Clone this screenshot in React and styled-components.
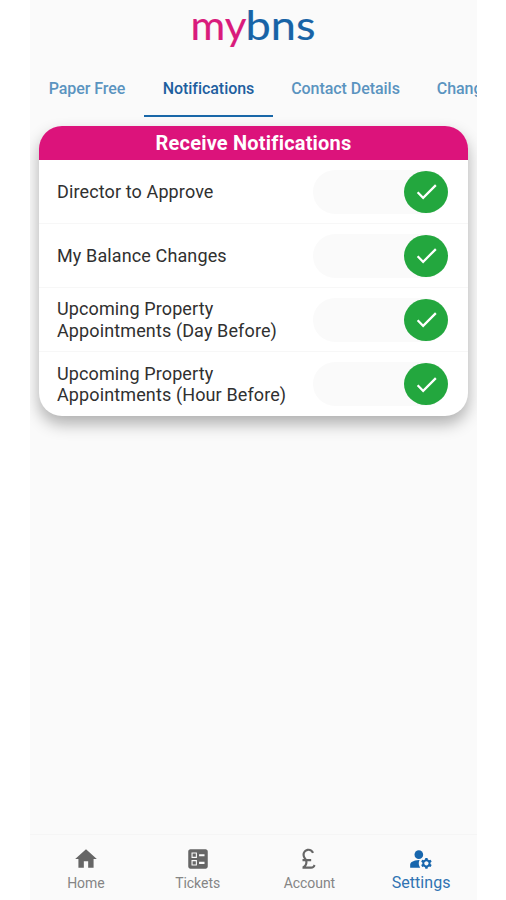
import React, { useState } from 'react';
import styled, { createGlobalStyle } from 'styled-components';
import {
  MdHome,
  MdBallot,
  MdCurrencyPound,
  MdManageAccounts,
  MdCheck,
} from 'react-icons/md';

const GlobalStyle = createGlobalStyle`
  * {
    box-sizing: border-box;
  }

  body {
    margin: 0;
    background: #ffffff;
    font-family: Roboto, sans-serif;
  }

  button {
    padding: 0;
    border: none;
    background: none;
    font-family: inherit;
    cursor: pointer;
  }
`;

const Screen = styled.div`
  display: flex;
  flex-direction: column;
  width: 447px;
  height: 900px;
  margin-left: 30px;
  background: #fafafa;
  overflow: hidden;
`;

const Header = styled.header`
  height: 60px;
  padding-left: 160px;
`;

const Logo = styled.svg`
  display: block;
  width: 128px;
  height: 60px;
  font-family: Lato, sans-serif;
  font-size: 40px;
  stroke-width: 0.15px;
`;

const Tabs = styled.nav`
  display: flex;
  flex-shrink: 0;
  height: 57px;
  overflow: hidden;
`;

const Tab = styled.button`
  flex: none;
  width: ${(props) => props.$width}px;
  padding-top: 1px;
  border-bottom: 2px solid ${(props) => (props.$active ? '#1967a8' : 'transparent')};
  color: ${(props) => (props.$active ? '#1e5f9f' : '#5a94c0')};
  font-size: 16px;
  font-weight: 500;
  letter-spacing: -0.05px;
  white-space: nowrap;
`;

const Content = styled.main`
  flex: 1;
  padding: 8.5px 9px 0;
`;

const Card = styled.section`
  height: 290px;
  border-radius: 23px;
  background: #ffffff;
  box-shadow: 0 8px 16px rgba(0, 0, 0, 0.3);
  overflow: hidden;
`;

const CardTitle = styled.h2`
  height: 34px;
  margin: 0;
  background: #dc137b;
  color: #ffffff;
  font-size: 20px;
  font-weight: 700;
  line-height: 35px;
  letter-spacing: 0.2px;
  text-align: center;
`;

const Row = styled.div`
  display: flex;
  align-items: center;
  justify-content: space-between;
  height: 64px;
  padding: 1px 20px 0 18px;
  border-bottom: 1px solid #f7f7f7;

  &:last-child {
    border-bottom: none;
  }
`;

const RowLabel = styled.span`
  color: #303030;
  font-size: 18px;
  line-height: 21.5px;
  letter-spacing: 0.12px;
  white-space: pre-line;
`;

const Toggle = styled.button`
  display: flex;
  align-items: center;
  justify-content: ${(props) => (props.$on ? 'flex-end' : 'flex-start')};
  width: 135px;
  height: 44px;
  border-radius: 22px;
  background: #fafafa;
`;

const Knob = styled.span`
  display: flex;
  align-items: center;
  justify-content: center;
  width: 44px;
  height: 42px;
  border-radius: 50%;
  background: ${(props) => (props.$on ? '#23a73e' : '#bdbdbd')};
  color: #ffffff;
  font-size: 27px;
`;

const BottomNav = styled.nav`
  display: flex;
  height: 66px;
  border-top: 1px solid #f5f5f5;
`;

const NavItem = styled.button`
  display: flex;
  flex: 1;
  flex-direction: column;
  align-items: center;
  padding-top: 11px;
  color: ${(props) => (props.$active ? '#1766ad' : '#666666')};
  font-size: 26px;
`;

const NavLabel = styled.span`
  margin-top: 2px;
  color: ${(props) => (props.$active ? '#2f73b2' : '#858585')};
  font-size: ${(props) => (props.$active ? 16 : 14)}px;
  line-height: 18px;
  letter-spacing: ${(props) => (props.$active ? 0.05 : -0.05)}px;
`;

const tabs = [
  { label: 'Paper Free', width: 114 },
  { label: 'Notifications', width: 129 },
  { label: 'Contact Details', width: 145 },
  { label: 'Change Password', width: 166 },
];

const settings = [
  'Director to Approve',
  'My Balance Changes',
  'Upcoming Property\nAppointments (Day Before)',
  'Upcoming Property\nAppointments (Hour Before)',
];

const navItems = [
  { label: 'Home', Icon: MdHome },
  { label: 'Tickets', Icon: MdBallot },
  { label: 'Account', Icon: MdCurrencyPound },
  { label: 'Settings', Icon: MdManageAccounts },
];

function App() {
  const [activeTab, setActiveTab] = useState('Notifications');
  const [activeNav, setActiveNav] = useState('Settings');
  const [enabled, setEnabled] = useState(settings.map(() => true));

  const toggleSetting = (index) => {
    setEnabled(enabled.map((value, i) => (i === index ? !value : value)));
  };

  return (
    <>
      <GlobalStyle />
      <Screen>
        <Header>
          <Logo viewBox="0 0 128 60" aria-label="mybns">
            <text
              x="0.5"
              y="40"
              textLength="56"
              lengthAdjust="spacingAndGlyphs"
              fill="#d91b7c"
              stroke="#d91b7c"
            >
              my
            </text>
            <text
              x="55.5"
              y="40"
              textLength="70"
              lengthAdjust="spacingAndGlyphs"
              fill="#1763a6"
              stroke="#1763a6"
            >
              bns
            </text>
          </Logo>
        </Header>
        <Tabs>
          {tabs.map((tab) => (
            <Tab
              key={tab.label}
              $width={tab.width}
              $active={activeTab === tab.label}
              onClick={() => setActiveTab(tab.label)}
            >
              {tab.label}
            </Tab>
          ))}
        </Tabs>
        <Content>
          <Card>
            <CardTitle>Receive Notifications</CardTitle>
            {settings.map((label, index) => (
              <Row key={label}>
                <RowLabel>{label}</RowLabel>
                <Toggle
                  $on={enabled[index]}
                  aria-label={label}
                  onClick={() => toggleSetting(index)}
                >
                  <Knob $on={enabled[index]}>{enabled[index] && <MdCheck />}</Knob>
                </Toggle>
              </Row>
            ))}
          </Card>
        </Content>
        <BottomNav>
          {navItems.map(({ label, Icon }) => (
            <NavItem
              key={label}
              $active={activeNav === label}
              onClick={() => setActiveNav(label)}
            >
              <Icon />
              <NavLabel $active={activeNav === label}>{label}</NavLabel>
            </NavItem>
          ))}
        </BottomNav>
      </Screen>
    </>
  );
}

export default App;
